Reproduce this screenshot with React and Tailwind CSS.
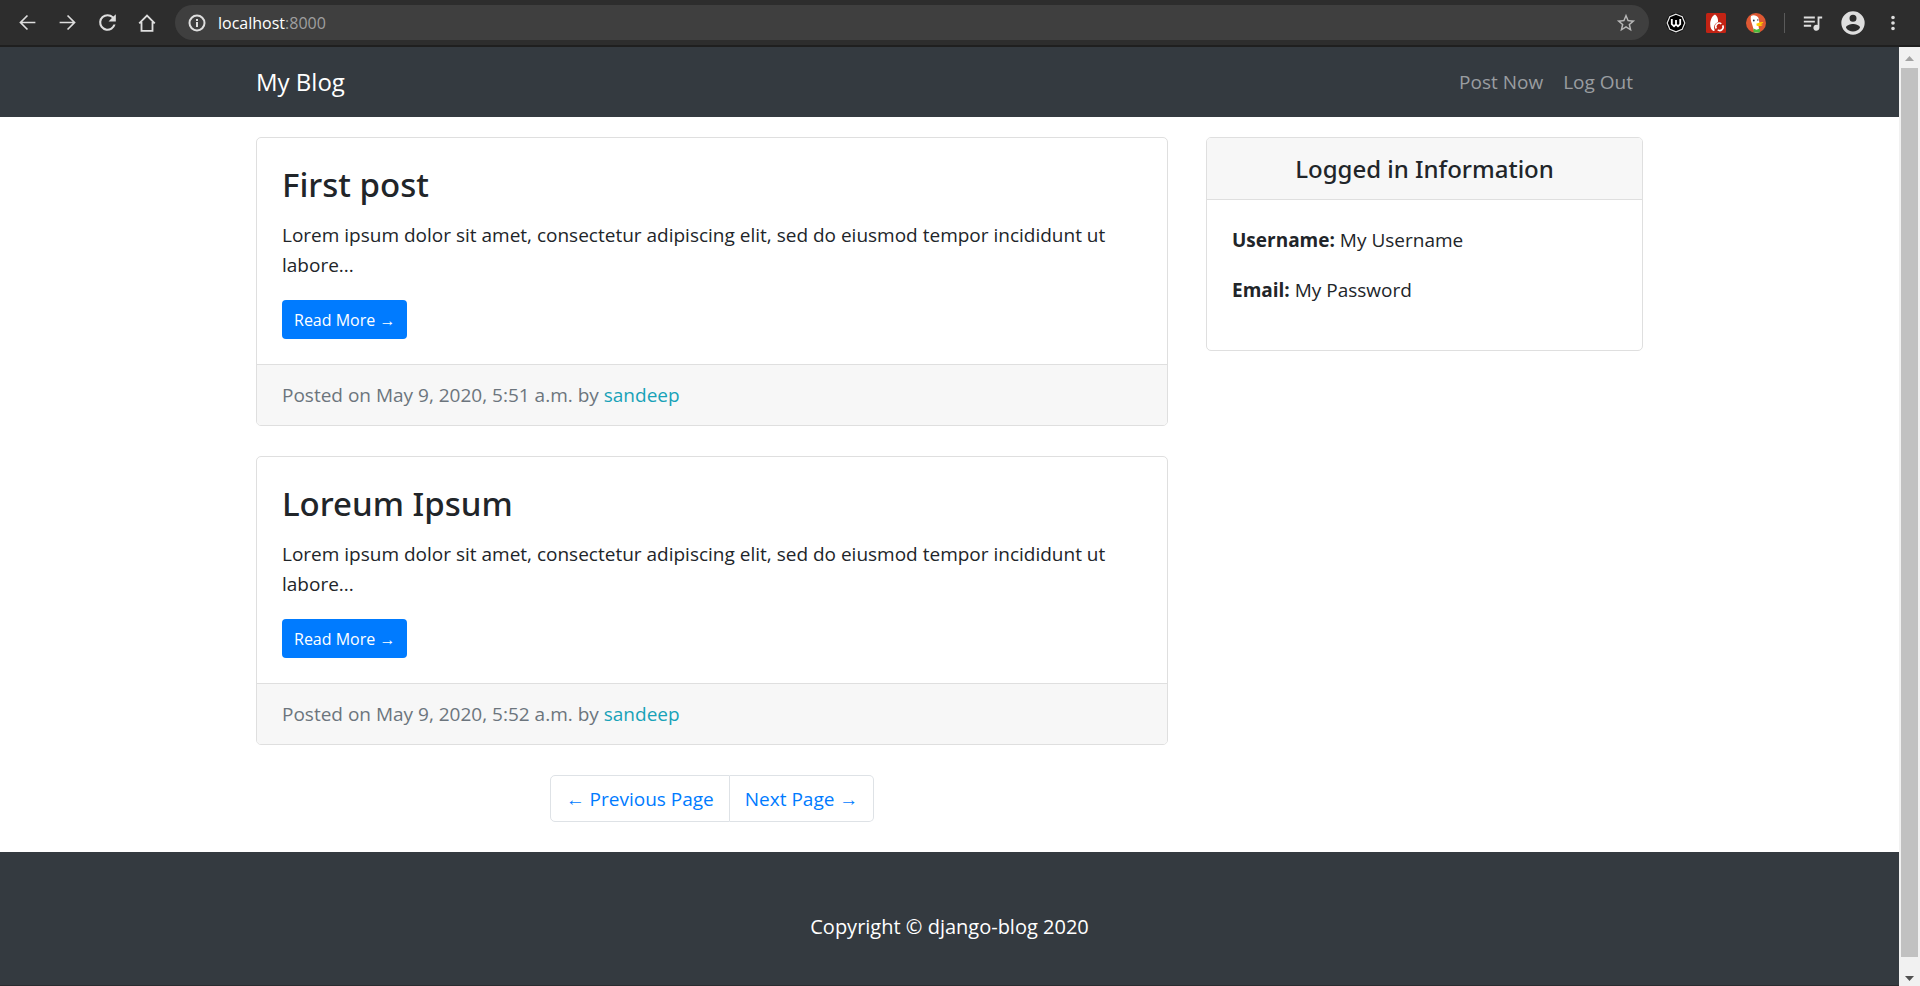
import React from "react";

const posts = [
  { id: 1, title: "First post", time: "5:51" },
  { id: 2, title: "Loreum Ipsum", time: "5:52" },
];

function ToolButton({ label, children }) {
  return (
    <button type="button" aria-label={label} className="flex size-10 items-center justify-center text-[#dedede]">
      {children}
    </button>
  );
}

function Glyph({ d, className = "size-[22px]" }) {
  return (
    <svg viewBox="0 0 24 24" className={className} fill="currentColor" aria-hidden="true">
      <path d={d} />
    </svg>
  );
}

function Toolbar() {
  return (
    <div className="flex h-[47px] shrink-0 items-center border-b-2 border-[#1f1f1f] bg-[#2d2d2d] pr-[7px] pl-[7px] font-['Open_Sans',sans-serif]">
      <ToolButton label="Back">
        <Glyph d="M21 11.1H6.1l6.5-6.5L11.3 3.300 2.600 12l8.700 8.700 1.300-1.300-6.500-6.500H21z" className="size-[21px]" />
      </ToolButton>
      <ToolButton label="Forward">
        <Glyph d="M3 11.1h14.900l-6.500-6.500 1.300-1.300 8.700 8.700-8.700 8.700-1.300-1.300 6.500-6.500H3z" className="size-[21px]" />
      </ToolButton>
      <ToolButton label="Reload">
        <Glyph d="M17.650 6.350A7.950 7.950 0 0 0 12 4a8 8 0 1 0 7.730 10h-2.080A6 6 0 1 1 12 6c1.660 0 3.140.690 4.220 1.780L13 11h7V4z" className="size-[25px]" />
      </ToolButton>
      <ToolButton label="Home">
        <svg viewBox="0 0 24 24" className="size-[22px]" fill="none" stroke="currentColor" strokeWidth="2" aria-hidden="true">
          <path d="M3.500 12.500 12 4l8.500 8.500M6 11v9.500h12V11" />
        </svg>
      </ToolButton>
      <div className="ml-2 flex h-[35px] flex-1 items-center rounded-full bg-[#3f3f3f] px-3">
        <svg viewBox="0 0 20 20" className="mr-[11px] size-5 text-[#dedede]" fill="none" stroke="currentColor" strokeWidth="2" aria-hidden="true">
          <circle cx="10" cy="10" r="7.500" />
          <path d="M10 9v5M10 6v2" />
        </svg>
        <div className="flex-1 text-[16px] leading-6 text-white">
          localhost<span className="text-[#9f9f9f]">:8000</span>
        </div>
        <button type="button" aria-label="Bookmark this page" className="text-[#b8b8b8]">
          <Glyph d="M22 9.240l-7.190-.620L12 2 9.190 8.630 2 9.240l5.460 4.730L5.820 21 12 17.270 18.180 21l-1.630-7.030zM12 15.400l-3.760 2.270 1-4.280-3.320-2.880 4.380-.380L12 6.100l1.710 4.040 4.380.380-3.320 2.880 1 4.280z" />
        </button>
      </div>
      <div className="ml-[7px] flex items-center">
        <ToolButton label="Web of trust extension">
          <svg viewBox="0 0 20 20" className="size-5" aria-hidden="true">
            <circle cx="10" cy="10" r="10" fill="#111" />
            <path d="M10 1.200l6.200 2.600L18.800 10l-2.600 6.200-6.200 2.600-6.200-2.600L1.200 10l2.600-6.200z" fill="#000" stroke="#e8e8e8" strokeWidth="1.200" />
            <path d="M5.800 6v5.200L8 13.300l2-2 2 2 2.200-2.100V6M10 7v4.500" fill="none" stroke="#fff" strokeWidth="1.800" />
          </svg>
        </ToolButton>
        <ToolButton label="Download extension">
          <svg viewBox="0 0 20 20" className="size-5" aria-hidden="true">
            <rect width="20" height="20" rx="1.500" fill="#c22314" />
            <path d="M9 1.500C6 3 4.300 7 4.200 11c0 3.500 1 6 3.300 7 1 .3 1.300-.5 1-1.500-1-3 0-6 3.500-7.500C12.300 6 11.500 3 9 1.500z" fill="#fff" />
            <path d="M10.300 15.500a3.500 3.500 0 0 1 5-4.700M16.700 12.300a3.500 3.500 0 0 1-5 4.600" fill="none" stroke="#fff" strokeWidth="1.600" />
          </svg>
        </ToolButton>
        <ToolButton label="Privacy extension">
          <svg viewBox="0 0 20 20" className="size-5" aria-hidden="true">
            <circle cx="10" cy="10" r="10" fill="#de5833" />
            <path d="M5 3c2-1.500 6-1 7.500 2l1 5-1 3 1 6c-2 .700-4 .600-5 .300L6 11C4.500 7.500 4.500 5 5 3z" fill="#fff" />
            <path d="M10.500 10.500c2 0 3-1.800 7-1.500-1 1.500-2 1.800-3.500 2.300l3 .4c-1 1.600-5 1.800-6.500.8z" fill="#fc0" />
            <path d="M7.500 15.500l3 1.200 3.500-1.200v4H7.500z" fill="#4cba3c" />
            <circle cx="7.800" cy="7.500" r=".9" fill="#234" />
            <circle cx="11.800" cy="7" r=".7" fill="#234" />
          </svg>
        </ToolButton>
        <span className="mx-2 h-5 w-px bg-[#5a5a5a]" />
        <ToolButton label="Media control">
          <Glyph d="M2 5h12v2H2zM2 9.500h12v2H2zM2 14h8v2H2zM22 5h-5v9.200a3.300 3.300 0 1 0 2 3V7h3z" />
        </ToolButton>
        <ToolButton label="Profile">
          <Glyph d="M12 2a10 10 0 1 0 0 20 10 10 0 0 0 0-20zm0 3a3 3 0 1 1 0 6 3 3 0 0 1 0-6zm0 14.200a7.200 7.200 0 0 1-6-3.220c.030-1.990 4-3.080 6-3.080s5.970 1.090 6 3.080a7.200 7.200 0 0 1-6 3.220z" className="size-7" />
        </ToolButton>
        <ToolButton label="Menu">
          <Glyph d="M12 8a2 2 0 1 0 0-4 2 2 0 0 0 0 4zm0 2a2 2 0 1 0 0 4 2 2 0 0 0 0-4zm0 6a2 2 0 1 0 0 4 2 2 0 0 0 0-4z" />
        </ToolButton>
      </div>
    </div>
  );
}

function PostCard({ title, time }) {
  return (
    <article className="mb-[30px] overflow-hidden rounded-[5px] border border-[#dfdfdf] bg-white">
      <div className="p-[25px]">
        <h2 className="mb-[13px] font-['Noto_Sans',sans-serif] text-[33px] leading-[44px] font-medium">{title}</h2>
        <p className="mb-5">
          Lorem ipsum dolor sit amet, consectetur adipiscing elit, sed do eiusmod tempor incididunt ut labore...
        </p>
        <a href="#post" className="flex h-[39px] w-fit items-center rounded-[4px] bg-[#007bff] px-3 text-[16px] text-white">
          Read More →
        </a>
      </div>
      <div className="border-t border-[#dfdfdf] bg-[#f7f7f7] px-[25px] py-[15px] text-[#6c757d]">
        Posted on May 9, 2020, {time} a.m. by{" "}
        <a href="#author" className="text-[#17a2b8]">sandeep</a>
      </div>
    </article>
  );
}

function ScrollRail() {
  return (
    <div className="flex w-[21px] shrink-0 flex-col items-center bg-[#f1f1f1]" aria-hidden="true">
      <svg viewBox="0 0 21 21" className="h-[21px] w-[21px] shrink-0" fill="#a3a3a3">
        <path d="M10.500 9 15 14H6z" />
      </svg>
      <div className="w-[17px] flex-1 bg-[#c1c1c1]" />
      <svg viewBox="0 0 21 29" className="h-[29px] w-[21px] shrink-0" fill="#505050">
        <path d="M6 19h9l-4.500 5z" />
      </svg>
    </div>
  );
}

export default function App() {
  return (
    <div className="flex h-screen flex-col overflow-hidden bg-white font-['Open_Sans',sans-serif] text-[19px] leading-[30px] text-[#212529]">
      <Toolbar />
      <div className="flex min-h-0 flex-1">
        <div className="flex min-w-0 flex-1 flex-col overflow-hidden">
          <nav className="shrink-0 bg-[#343a40]">
            <div className="mx-auto flex h-[70px] max-w-[1425px] items-center justify-between px-[19px]">
              <a href="#home" className="text-[24px] text-white">My Blog</a>
              <div className="flex gap-5 pr-[10px] text-[#9a9da0]">
                <a href="#new">Post Now</a>
                <a href="#logout">Log Out</a>
              </div>
            </div>
          </nav>
          <main className="mx-auto grid w-full max-w-[1425px] shrink-0 grid-cols-3 pt-5">
            <div className="col-span-2 px-[19px]">
              {posts.map((post) => (
                <PostCard key={post.id} title={post.title} time={post.time} />
              ))}
              <div className="mb-[30px] flex h-[47px] items-stretch justify-center text-[#007bff]">
                <a href="#previous" className="flex items-center rounded-l-[5px] border border-[#dee2e6] px-[15px]">← Previous Page</a>
                <a href="#next" className="flex items-center rounded-r-[5px] border border-l-0 border-[#dee2e6] px-[15px]">Next Page →</a>
              </div>
            </div>
            <aside className="px-[19px]">
              <section className="overflow-hidden rounded-[5px] border border-[#dfdfdf]">
                <h5 className="border-b border-[#dfdfdf] bg-[#f7f7f7] py-[15px] text-center font-['Noto_Sans',sans-serif] text-[24px] leading-[31px] font-medium">
                  Logged in Information
                </h5>
                <div className="p-[25px]">
                  <p className="mb-5"><b>Username:</b> My Username</p>
                  <p className="mb-5"><b>Email:</b> My Password</p>
                </div>
              </section>
            </aside>
          </main>
          <footer className="flex-1 border-b border-[#2a2c30] bg-[#343a40] pt-[60px] text-center text-[20px] text-white">
            <p>Copyright © django-blog 2020</p>
          </footer>
        </div>
        <ScrollRail />
      </div>
    </div>
  );
}
